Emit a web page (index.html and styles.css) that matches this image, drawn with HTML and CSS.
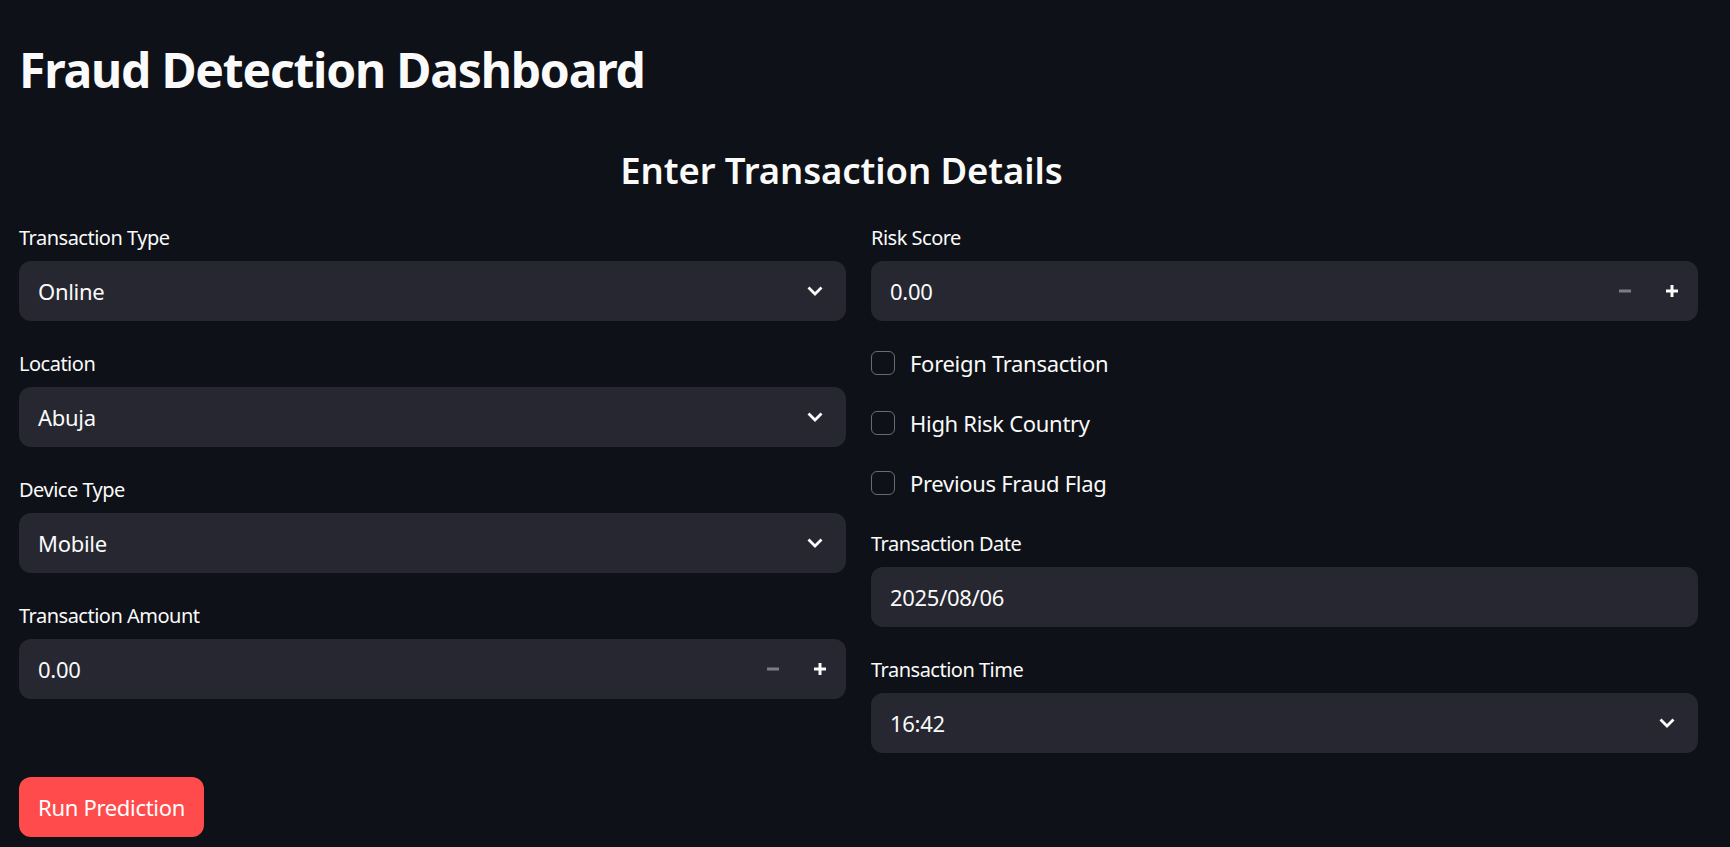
FILE: index.html
```html
<!DOCTYPE html>
<html lang="en">
<head>
<meta charset="utf-8">
<title>Fraud Detection Dashboard</title>
<link rel="stylesheet" href="styles.css">
</head>
<body>
<main class="app">
  <h1 class="title">Fraud Detection Dashboard</h1>
  <h2 class="subheader">Enter Transaction Details</h2>
  <div class="columns">
    <div class="col">
      <div class="widget">
        <div class="label">Transaction Type</div>
        <div class="field select"><span>Online</span>
          <svg class="chev" width="16" height="10" viewBox="0 0 16 10"><polyline points="1.5,1.5 8,8 14.5,1.5" fill="none" stroke="#fafafa" stroke-width="2.8"/></svg>
        </div>
      </div>
      <div class="widget">
        <div class="label">Location</div>
        <div class="field select"><span>Abuja</span>
          <svg class="chev" width="16" height="10" viewBox="0 0 16 10"><polyline points="1.5,1.5 8,8 14.5,1.5" fill="none" stroke="#fafafa" stroke-width="2.8"/></svg>
        </div>
      </div>
      <div class="widget">
        <div class="label">Device Type</div>
        <div class="field select"><span>Mobile</span>
          <svg class="chev" width="16" height="10" viewBox="0 0 16 10"><polyline points="1.5,1.5 8,8 14.5,1.5" fill="none" stroke="#fafafa" stroke-width="2.8"/></svg>
        </div>
      </div>
      <div class="widget">
        <div class="label">Transaction Amount</div>
        <div class="field number"><span>0.00</span>
          <div class="steps">
            <svg class="step minus" width="14" height="14" viewBox="0 0 14 14"><rect x="1" y="5.5" width="12" height="3" fill="#7a7c86"/></svg>
            <svg class="step plus" width="14" height="14" viewBox="0 0 14 14"><rect x="1" y="5.5" width="12" height="3" fill="#fafafa"/><rect x="5.5" y="1" width="3" height="12" fill="#fafafa"/></svg>
          </div>
        </div>
      </div>
    </div>
    <div class="col">
      <div class="widget">
        <div class="label">Risk Score</div>
        <div class="field number"><span>0.00</span>
          <div class="steps">
            <svg class="step minus" width="14" height="14" viewBox="0 0 14 14"><rect x="1" y="5.5" width="12" height="3" fill="#7a7c86"/></svg>
            <svg class="step plus" width="14" height="14" viewBox="0 0 14 14"><rect x="1" y="5.5" width="12" height="3" fill="#fafafa"/><rect x="5.5" y="1" width="3" height="12" fill="#fafafa"/></svg>
          </div>
        </div>
      </div>
      <label class="check"><span class="box"></span><span>Foreign Transaction</span></label>
      <label class="check"><span class="box"></span><span>High Risk Country</span></label>
      <label class="check"><span class="box"></span><span>Previous Fraud Flag</span></label>
      <div class="widget">
        <div class="label">Transaction Date</div>
        <div class="field"><span>2025/08/06</span></div>
      </div>
      <div class="widget">
        <div class="label">Transaction Time</div>
        <div class="field select"><span>16:42</span>
          <svg class="chev" width="16" height="10" viewBox="0 0 16 10"><polyline points="1.5,1.5 8,8 14.5,1.5" fill="none" stroke="#fafafa" stroke-width="2.8"/></svg>
        </div>
      </div>
    </div>
  </div>
  <button class="run">Run Prediction</button>
</main>
</body>
</html>
```
FILE: styles.css
```css
* { box-sizing: border-box; }
html, body { margin: 0; background: #0e1117; }
body {
  color: #fafafa;
  font-family: "Noto Sans", "Open Sans", sans-serif;
  height: 847px;
  overflow: hidden;
}
.app {
  padding: 0 32px 0 19px;
  display: flex;
  flex-direction: column;
}
.title {
  margin: 0;
  padding-top: 32px;
  font-size: 48px;
  line-height: 76px;
  font-weight: 700;
  letter-spacing: -1.2px;
}
.subheader {
  margin: 36px 0 0 0;
  padding-right: 34px;
  text-align: center;
  font-size: 36.5px;
  line-height: 52px;
  font-weight: 600;
  letter-spacing: -0.1px;
}
.columns {
  margin-top: 23px;
  display: grid;
  grid-template-columns: 1fr 1fr;
  column-gap: 25px;
}
.col {
  display: flex;
  flex-direction: column;
  gap: 24px;
}
.label {
  min-height: 36px;
  margin-bottom: 6px;
  display: flex;
  align-items: center;
  font-size: 20px;
  letter-spacing: -0.5px;
}
.field {
  height: 60px;
  background: #262730;
  border-radius: 12px;
  padding: 0 19px;
  display: flex;
  align-items: center;
  justify-content: space-between;
  font-size: 22px;
  letter-spacing: -0.3px;
}
.chev { margin-right: 4px; }
.steps { display: flex; align-items: center; gap: 33px; }
.check {
  height: 36px;
  display: flex;
  align-items: center;
  gap: 15px;
  font-size: 22px;
  letter-spacing: -0.3px;
}
.box {
  width: 24px;
  height: 24px;
  border: 1px solid #6a6c75;
  border-radius: 6px;
  margin-left: 0;
}
.run {
  margin-top: 24px;
  align-self: flex-start;
  height: 60px;
  padding: 0 19px;
  background: #ff4b4b;
  color: #fff;
  border: none;
  border-radius: 12px;
  font-family: inherit;
  font-size: 22px;
  letter-spacing: -0.3px;
}
```
